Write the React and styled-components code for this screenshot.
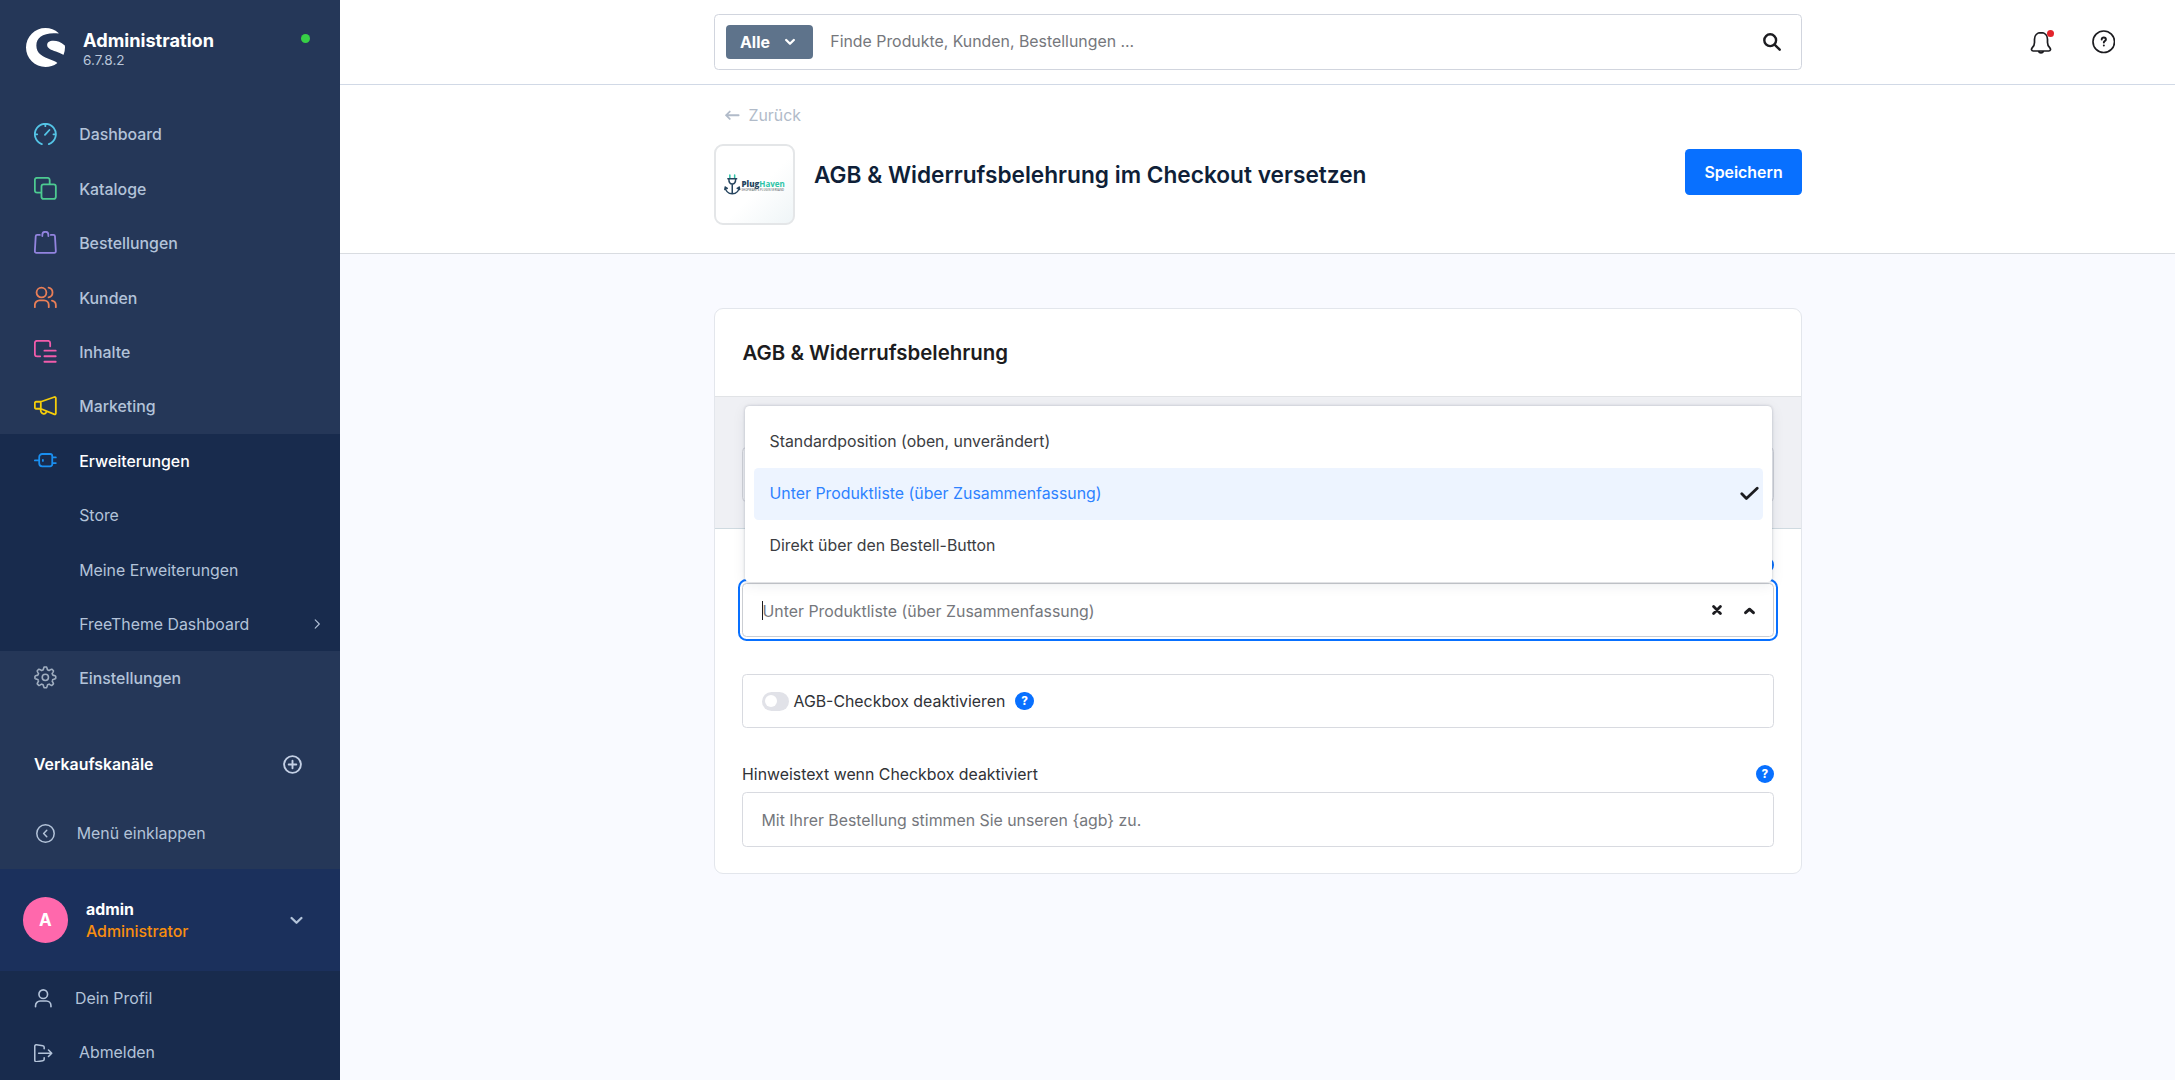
import React from 'react';
import styled, { createGlobalStyle, css } from 'styled-components';
import { SiShopware } from 'react-icons/si';

const GlobalStyle = createGlobalStyle`
  *, *::before, *::after {
    box-sizing: border-box;
  }

  body {
    margin: 0;
    overflow: hidden;
    font-family: Inter, 'Liberation Sans', sans-serif;
    font-size: 15.87px;
    color: #1c1c20;
    background: #f9faff;
  }
`;

const Layout = styled.div`
  display: flex;
  width: 100%;
  height: 1080px;
`;

const Sidebar = styled.aside`
  display: flex;
  flex-direction: column;
  flex: none;
  width: 340px;
  height: 1080px;
  background: #253758;
  color: #b3c3d9;
`;

const Brand = styled.div`
  display: flex;
  height: 107.2px;
  padding: 28px 30px 0 26px;
`;

const BrandText = styled.div`
  flex: 1;
  margin-left: 18px;
`;

const BrandName = styled.div`
  margin-top: 1px;
  font-size: 18.2px;
  font-weight: 700;
  line-height: 22px;
  color: #fff;
`;

const BrandVersion = styled.div`
  font-size: 13.6px;
  line-height: 18px;
  color: #b9c6d8;
`;

const Status = styled.span`
  width: 9px;
  height: 9px;
  margin-top: 6px;
  border-radius: 50%;
  background: #37d046;
`;

const NavGroup = styled.div`
  flex: none;
  background: ${({ $active }) => ($active ? '#182b4d' : 'transparent')};
`;

const NavItem = styled.a`
  display: flex;
  align-items: center;
  height: 54.4px;
  padding: 1px 18px 0 34px;
  font-weight: 500;
  color: ${({ $active }) => ($active ? '#fff' : '#b3c3d9')};
`;

const NavIcon = styled.span`
  display: flex;
  width: 22.7px;
  margin: -2px 22.5px 0 0;
  color: ${({ $color }) => $color};
`;

const NavLabel = styled.span`
  flex: 1;
  padding-left: ${({ $sub }) => ($sub ? '45.2px' : '0')};
  font-weight: ${({ $sub }) => ($sub ? 400 : 500)};
`;

const ChannelHead = styled.div`
  display: flex;
  align-items: center;
  justify-content: space-between;
  height: 54.4px;
  margin-top: 31.5px;
  padding: 0 38px 0 34px;
  font-weight: 600;
  color: #fff;

  svg {
    color: #c3cfe4;
  }
`;

const Collapse = styled.div`
  display: flex;
  align-items: center;
  height: 54.4px;
  margin-top: 14.5px;
  padding-left: 36px;
  gap: 21.8px;
`;

const User = styled.div`
  display: flex;
  align-items: center;
  height: 102.3px;
  margin-top: auto;
  padding: 0 37px 0 22.7px;
  background: #1b305c;
`;

const Avatar = styled.span`
  display: flex;
  align-items: center;
  justify-content: center;
  width: 45.3px;
  height: 45.3px;
  border-radius: 50%;
  background: #ff68ac;
  font-size: 17px;
  font-weight: 700;
  color: #fff;
`;

const UserText = styled.div`
  flex: 1;
  margin-left: 18px;
  padding-top: 1px;
  line-height: 21.5px;
`;

const UserName = styled.div`
  font-weight: 700;
  color: #fff;
`;

const UserRole = styled.div`
  font-weight: 500;
  color: #f88e0f;
`;

const UserMenu = styled.div`
  flex: none;
  background: #182b4d;
`;

const UserAction = styled.a`
  display: flex;
  align-items: center;
  height: 54.4px;
  padding-left: 34px;
  gap: ${({ $gap }) => $gap}px;
`;

const Main = styled.main`
  display: flex;
  flex-direction: column;
  flex: 1;
`;

const Topbar = styled.header`
  display: grid;
  grid-template-columns: 374px 1088px 373px;
  flex: none;
  height: 85px;
  padding-top: 13.6px;
  background: #fff;
  border-bottom: 1.13px solid #d1d9e6;
`;

const Search = styled.div`
  grid-column: 2;
  display: flex;
  align-items: center;
  height: 56.7px;
  padding: 0 20px 0 11px;
  border: 1.13px solid #d1d5de;
  border-radius: 4.5px;
  background: #fff;
`;

const SearchType = styled.button`
  display: flex;
  align-items: center;
  justify-content: space-between;
  width: 87.3px;
  height: 34px;
  padding: 1px 18px 0 14px;
  border: 0;
  border-radius: 4px;
  background: #5e738b;
  font: 700 15.87px Inter, sans-serif;
  color: #fff;
`;

const SearchPlaceholder = styled.span`
  flex: 1;
  margin-left: 17px;
  color: #75777c;
`;

const TopActions = styled.div`
  display: flex;
  align-items: center;
  justify-content: flex-end;
  height: 56.7px;
  padding-right: 60px;
  gap: 39px;
`;

const Bell = styled.span`
  position: relative;
  display: flex;

  &::after {
    content: '';
    position: absolute;
    top: 0;
    right: -1px;
    width: 7px;
    height: 7px;
    border-radius: 50%;
    background: #e3242c;
  }
`;

const SmartBar = styled.section`
  flex: none;
  height: 168.7px;
  background: #fff;
  border-bottom: 1.13px solid #d9dce1;
`;

const SmartBarInner = styled.div`
  width: 1088px;
  margin-left: 374px;
  padding-top: 18px;
`;

const Back = styled.a`
  display: flex;
  align-items: center;
  height: 24px;
  padding-left: 11px;
  gap: 9px;
  color: #b1bbc9;
`;

const TitleRow = styled.div`
  display: flex;
  align-items: flex-start;
  margin-top: 17.2px;
`;

const AppIcon = styled.div`
  display: flex;
  align-items: center;
  width: 81px;
  height: 81px;
  padding-left: 8px;
  border: 2px solid #e4e6e8;
  border-radius: 9px;
  background: linear-gradient(135deg, #fff 55%, #eff5f7);
`;

const AppLogoText = styled.div`
  margin: 2px 0 0 1px;
  font: 800 8px/9px 'Open Sans', sans-serif;
  color: #25445e;

  em {
    font-style: normal;
    font-weight: 700;
    color: #2ec4a7;
  }

  small {
    display: block;
    font-size: 2.7px;
    font-weight: 600;
    line-height: 4px;
    letter-spacing: 0.08px;
    white-space: nowrap;
    color: #6d7578;
  }
`;

const PageTitle = styled.h1`
  flex: 1;
  margin: 17px 0 0 19px;
  font-size: 22.67px;
  font-weight: 600;
  line-height: 28px;
  color: #0f1f38;
`;

const SaveButton = styled.button`
  width: 117px;
  height: 45.5px;
  margin-top: 5px;
  padding: 1px 0 0;
  border: 0;
  border-radius: 4.5px;
  background: #0870ff;
  font: 600 15.87px Inter, sans-serif;
  color: #fff;
`;

const Card = styled.section`
  width: 1088px;
  margin: 54.8px 0 0 374px;
  border: 1.13px solid #e3e6ec;
  border-radius: 9px;
  background: #fff;
`;

const CardTitle = styled.h2`
  margin: 0;
  padding: 32px 27.5px 0;
  height: 88px;
  border-bottom: 1.13px solid #e1e3e6;
  font-size: 20.4px;
  font-weight: 600;
  line-height: 24px;
  color: #1c1c20;
`;

const ChannelArea = styled.div`
  height: 131.5px;
  padding: 50px 27px 0;
  border-bottom: 1.13px solid #cfdae0;
  background: #eff0f4;
`;

const CardBody = styled.div`
  padding: 26px 27px 26.5px;
`;

const FieldHead = styled.div`
  display: flex;
  align-items: center;
  justify-content: space-between;
  height: 20px;
  margin-bottom: 8px;
  color: #303237;
`;

const Field = styled.div`
  position: relative;
  display: flex;
  align-items: center;
  height: 54.4px;
  margin-bottom: ${({ $gap }) => $gap || 0}px;
  padding: 0 18.5px;
  border: 1.13px solid ${({ $muted }) => ($muted ? '#cfd1d8' : '#d8dae0')};
  border-radius: 4.5px;
  background: ${({ $muted }) => ($muted ? 'transparent' : '#fff')};
  color: #75777c;

  ${({ $focused }) =>
    $focused &&
    css`
      border-color: #cbced3;
      outline: 2px solid #0870ff;
      outline-offset: 2px;
    `}
`;

const Caret = styled.span`
  width: 1px;
  height: 19px;
  margin-top: 1px;
  background: #1c1c20;
`;

const FieldValue = styled.span`
  flex: 1;
  padding-top: 2.5px;
`;

const SelectActions = styled.span`
  display: flex;
  align-items: center;
  gap: 22px;
  color: #1c1c20;
`;

const Dropdown = styled.ul`
  position: absolute;
  z-index: 2;
  left: 1.5px;
  right: 1.5px;
  bottom: 54.5px;
  height: 175.5px;
  margin: 0;
  padding: 9.3px 9px;
  list-style: none;
  border-radius: 4.5px;
  background: #fff;
  box-shadow: 0 0 3px rgba(30, 40, 60, 0.25), 0 3px 14px rgba(30, 40, 60, 0.08);
`;

const Option = styled.li`
  display: flex;
  align-items: center;
  justify-content: space-between;
  height: 52.1px;
  padding: 0 4px 0 16px;
  border-radius: 4.5px;
  background: ${({ $selected }) => ($selected ? '#edf4ff' : 'transparent')};
  color: ${({ $selected }) => ($selected ? '#2d82ff' : '#3b3d42')};

  svg {
    color: #1c1c20;
  }
`;

const Switch = styled.span`
  display: flex;
  align-items: center;
  width: 27px;
  height: 19px;
  padding-left: 3px;
  border-radius: 10px;
  background: #e1e2e8;

  &::before {
    content: '';
    width: 12px;
    height: 12px;
    border-radius: 50%;
    background: #fff;
  }
`;

const SwitchLabel = styled.span`
  margin: 1px 10px 0 5px;
  color: #303237;
`;

const HelpBadge = styled.span`
  display: flex;
  align-items: center;
  justify-content: center;
  width: 18.1px;
  height: 18.1px;
  border-radius: 50%;
  background: #0870ff;
  font-size: 11.5px;
  font-weight: 800;
  color: #fff;
`;

const Svg = ({ size = 22.7, height, box = '0 0 24 24', width = 1.9, children }) => (
  <svg
    width={size}
    height={height || size}
    viewBox={box}
    fill="none"
    stroke="currentColor"
    strokeWidth={width}
    strokeLinecap="round"
    strokeLinejoin="round"
  >
    {children}
  </svg>
);

// Outline of a cog with eight soft teeth
const cogPath = () => {
  const points = [];
  for (let i = 0; i < 160; i += 1) {
    const a = (i / 160) * Math.PI * 2;
    const wave = Math.max(-0.8, Math.min(0.8, Math.cos(a * 8) * 1.3));
    const r = 9.6 + wave * 1.75;
    points.push(`${(12 + r * Math.sin(a)).toFixed(2)} ${(12 - r * Math.cos(a)).toFixed(2)}`);
  }
  return `M${points.join('L')}Z`;
};

const icons = {
  dashboard: (
    <Svg>
      <path d="M8.3 22.4a11.1 11.1 0 1 1 7.4 0M12 1v2.4M1 12h2.4M20.6 12h2.4M11.6 12.6l4.7-5.2" />
    </Svg>
  ),
  catalog: (
    <Svg>
      <path d="M7.6 16.6H3.2A2.3 2.3 0 0 1 .9 14.3V3.2A2.3 2.3 0 0 1 3.2.9h11.1a2.3 2.3 0 0 1 2.3 2.3v4.2" />
      <rect x="7.9" y="7.7" width="15.2" height="15.4" rx="2.3" />
    </Svg>
  ),
  orders: (
    <Svg>
      <path d="M6.2 4.2H3.4a1.6 1.6 0 0 0-1.6 1.5L.9 21.3a1.7 1.7 0 0 0 1.7 1.8h18.8a1.7 1.7 0 0 0 1.7-1.8l-.9-15.6a1.6 1.6 0 0 0-1.6-1.5h-2.8M8.8 5.400V3.900A3.100 3.100 0 0 1 11.900.9h.2a3.100 3.100 0 0 1 3.100 3v1.500" />
    </Svg>
  ),
  customers: (
    <Svg>
      <circle cx="7.9" cy="6.900" r="5.200" />
      <path d="M15.400 1.800a5.200 5.200 0 0 1 0 10.200M.9 22.400v-2.200a5 5 0 0 1 5-5h4.700a5 5 0 0 1 5 5v2.200M19 15.400a5 5 0 0 1 4.100 4.800v2.200" />
    </Svg>
  ),
  content: (
    <Svg>
      <path d="M6.600 17.300H3.200A2.300 2.300 0 0 1 .9 15V3.200A2.300 2.300 0 0 1 3.200.9h11.600a2.300 2.300 0 0 1 2.300 2.300v3.400M11 11.300h12M11 17.200h12M11 23h12" />
    </Svg>
  ),
  marketing: (
    <Svg>
      <path d="M7.200 8.200L21.700 3.200a1.100 1.100 0 0 1 1.400 1v16.400a1.100 1.100 0 0 1-1.400 1L7.200 15.600M2.100 8.200h5.100v7.400H2.100a1.200 1.200 0 0 1-1.200-1.200V9.400a1.200 1.200 0 0 1 1.200-1.200ZM7.200 15.600c-.5 2.800.7 5 2.800 5.300 1.700.2 2.900-.7 3.300-2.800" />
    </Svg>
  ),
  plug: (
    <Svg>
      <path d="M.9 12h4.600M8.700 5.300h8.400a2.200 2.200 0 0 1 2.200 2.200v8.600a2.200 2.200 0 0 1-2.200 2.200H8.700a3.200 3.200 0 0 1-3.200-3.200V8.500a3.200 3.200 0 0 1 3.200-3.200ZM19.300 8.900h3.800M19.300 14.900h3.800M9.400 11.400v1.200" />
    </Svg>
  ),
  settings: (
    <Svg width={1.7}>
      <path d={cogPath()} />
      <circle cx="12" cy="12" r="3.300" />
    </Svg>
  ),
};

const menu = [
  { label: 'Dashboard', icon: 'dashboard', color: '#54c4e6' },
  { label: 'Kataloge', icon: 'catalog', color: '#4dca91' },
  { label: 'Bestellungen', icon: 'orders', color: '#9384df' },
  { label: 'Kunden', icon: 'customers', color: '#ea7f57' },
  { label: 'Inhalte', icon: 'content', color: '#f25cab' },
  { label: 'Marketing', icon: 'marketing', color: '#f5cd0a' },
];

const options = [
  'Standardposition (oben, unverändert)',
  'Unter Produktliste (über Zusammenfassung)',
  'Direkt über den Bestell-Button',
];

const selected = options[1];

const MenuEntry = ({ label, icon, color, active }) => (
  <NavItem $active={active}>
    <NavIcon $color={color}>{icons[icon]}</NavIcon>
    <NavLabel>{label}</NavLabel>
  </NavItem>
);

const SideMenu = () => (
  <Sidebar>
    <Brand>
      <SiShopware size={39} color="#fff" />
      <BrandText>
        <BrandName>Administration</BrandName>
        <BrandVersion>6.7.8.2</BrandVersion>
      </BrandText>
      <Status />
    </Brand>
    <NavGroup>
      {menu.map((item) => (
        <MenuEntry key={item.label} {...item} />
      ))}
    </NavGroup>
    <NavGroup $active>
      <MenuEntry label="Erweiterungen" icon="plug" color="#1a8ff0" active />
      <NavItem>
        <NavLabel $sub>Store</NavLabel>
      </NavItem>
      <NavItem>
        <NavLabel $sub>Meine Erweiterungen</NavLabel>
      </NavItem>
      <NavItem>
        <NavLabel $sub>FreeTheme Dashboard</NavLabel>
        <Svg size={10} box="0 0 10 10" width={1.1}>
          <path d="M3.200.9L7.300 5L3.200 9.100" />
        </Svg>
      </NavItem>
    </NavGroup>
    <NavGroup>
      <MenuEntry label="Einstellungen" icon="settings" color="#a0aec0" />
    </NavGroup>
    <ChannelHead>
      <span>Verkaufskanäle</span>
      <Svg size={19} width={2.4}>
        <circle cx="12" cy="12" r="10.600" />
        <path d="M12 7.200v9.600M7.200 12h9.600" />
      </Svg>
    </ChannelHead>
    <Collapse>
      <Svg size={19}>
        <circle cx="12" cy="12" r="11" />
        <path d="M13.600 8L9.600 12l4 4" />
      </Svg>
      <span>Menü einklappen</span>
    </Collapse>
    <User>
      <Avatar>A</Avatar>
      <UserText>
        <UserName>admin</UserName>
        <UserRole>Administrator</UserRole>
      </UserText>
      <Svg size={13} box="0 0 13 13" width={2.300}>
        <path d="M1.600 4L6.500 8.800L11.400 4" />
      </Svg>
    </User>
    <UserMenu>
      <UserAction $gap={22.5}>
        <Svg size={18.5} width={2.1}>
          <circle cx="12" cy="6.800" r="5.600" />
          <path d="M2 23v-1.400a6 6 0 0 1 6-6h8a6 6 0 0 1 6 6v1.400" />
        </Svg>
        <span>Dein Profil</span>
      </UserAction>
      <UserAction $gap={26.5}>
        <Svg size={18.5} width={2}>
          <path d="M13.200 6.200V4.300a2 2 0 0 0-1.700-2L3.200 1A1.900 1.900 0 0 0 1 2.900v18.200A1.900 1.900 0 0 0 3.200 23l8.300-1.300a2 2 0 0 0 1.700-2v-1.900M6 12h17M18.800 7.800L23 12l-4.200 4.200" />
        </Svg>
        <span>Abmelden</span>
      </UserAction>
    </UserMenu>
  </Sidebar>
);

const App = () => (
  <Layout>
    <GlobalStyle />
    <SideMenu />
    <Main>
      <Topbar>
        <Search>
          <SearchType>
            Alle
            <Svg size={10} box="0 0 10 10" width={2.3}>
              <path d="M1.200 3L5 6.700L8.800 3" />
            </Svg>
          </SearchType>
          <SearchPlaceholder>Finde Produkte, Kunden, Bestellungen ...</SearchPlaceholder>
          <Svg size={18} box="0 0 18 18" width={2.400}>
            <circle cx="7.200" cy="7.200" r="5.900" />
            <path d="M11.600 11.600L16.700 16.700" />
          </Svg>
        </Search>
        <TopActions>
          <Bell>
            <Svg size={24} width={1.700}>
              <path d="M12 2.700c-4 0-6.500 2.800-6.500 6.500v3.200c0 2.400-.7 3.600-2.200 5.200-1.400 1.600-.9 3.400.9 3.400h15.600c1.800 0 2.300-1.800.9-3.400-1.500-1.600-2.200-2.800-2.200-5.200V9.200c0-3.700-2.500-6.500-6.500-6.500ZM9.600 21.400c.4 1 1.200 1.500 2.400 1.500s2-.5 2.400-1.500" />
            </Svg>
          </Bell>
          <Svg size={23.5} width={1.700}>
            <circle cx="12" cy="12" r="11" />
            <path strokeWidth="2" d="M9.900 9.700c0-1.300.9-2.100 2.100-2.100s2.200.8 2.200 2c0 1.600-2.100 1.700-2.100 3.200M12.100 15.700v.1" />
          </Svg>
        </TopActions>
      </Topbar>
      <SmartBar>
        <SmartBarInner>
          <Back>
            <Svg size={14.5} box="0 0 14 14" width={1.700}>
              <path d="M13.200 7H1M4.600 3.400L1 7l3.600 3.600" />
            </Svg>
            Zurück
          </Back>
          <TitleRow>
            <AppIcon>
              <Svg size={16.5} height={21} box="0 0 16 21" width={1.500}>
                <path stroke="#2ec4a7" d="M5.600 1v3M10.400 1v3" />
                <path stroke="#25445e" d="M3.600 4.800h8.800M4.600 5c0 3.400 1.200 5 3.400 5s3.400-1.600 3.400-5M8 10v9.800M1 13c.4 4 3 6.600 7 6.800 4-.2 6.600-2.800 7-6.800M1 13l-.4 2.400M1 13l2 1.400M15 13l.4 2.400M15 13l-2 1.400" />
              </Svg>
              <AppLogoText>
                Plug<em>Haven</em>
                <small>SHOPWARE 6 PLUGIN VERSAND</small>
              </AppLogoText>
            </AppIcon>
            <PageTitle>AGB &amp; Widerrufsbelehrung im Checkout versetzen</PageTitle>
            <SaveButton>Speichern</SaveButton>
          </TitleRow>
        </SmartBarInner>
      </SmartBar>
      <Card>
        <CardTitle>AGB &amp; Widerrufsbelehrung</CardTitle>
        <ChannelArea>
          <Field $muted />
        </ChannelArea>
        <CardBody>
          <FieldHead>
            <span />
            <HelpBadge>?</HelpBadge>
          </FieldHead>
          <Field $focused $gap={36.5}>
            <Caret />
            <FieldValue>{selected}</FieldValue>
            <SelectActions>
              <Svg size={10} box="0 0 10 10" width={2.8}>
                <path d="M1.600 1.600l6.800 6.800M8.400 1.600L1.600 8.400" />
              </Svg>
              <Svg size={11} box="0 0 11 11" width={2.9}>
                <path d="M1.600 7.700l3.900-3.500l3.900 3.500" />
              </Svg>
            </SelectActions>
            <Dropdown>
              {options.map((option) => (
                <Option key={option} $selected={option === selected}>
                  {option}
                  {option === selected && (
                    <Svg size={19} box="0 0 19 19" width={2.8}>
                      <path d="M1.800 9.800l4.600 4.600L17.200 4.200" />
                    </Svg>
                  )}
                </Option>
              ))}
            </Dropdown>
          </Field>
          <Field $gap={36}>
            <Switch />
            <SwitchLabel>AGB-Checkbox deaktivieren</SwitchLabel>
            <HelpBadge>?</HelpBadge>
          </Field>
          <FieldHead>
            <span>Hinweistext wenn Checkbox deaktiviert</span>
            <HelpBadge>?</HelpBadge>
          </FieldHead>
          <Field>
            <FieldValue>Mit Ihrer Bestellung stimmen Sie unseren {'{agb}'} zu.</FieldValue>
          </Field>
        </CardBody>
      </Card>
    </Main>
  </Layout>
);

export default App;
